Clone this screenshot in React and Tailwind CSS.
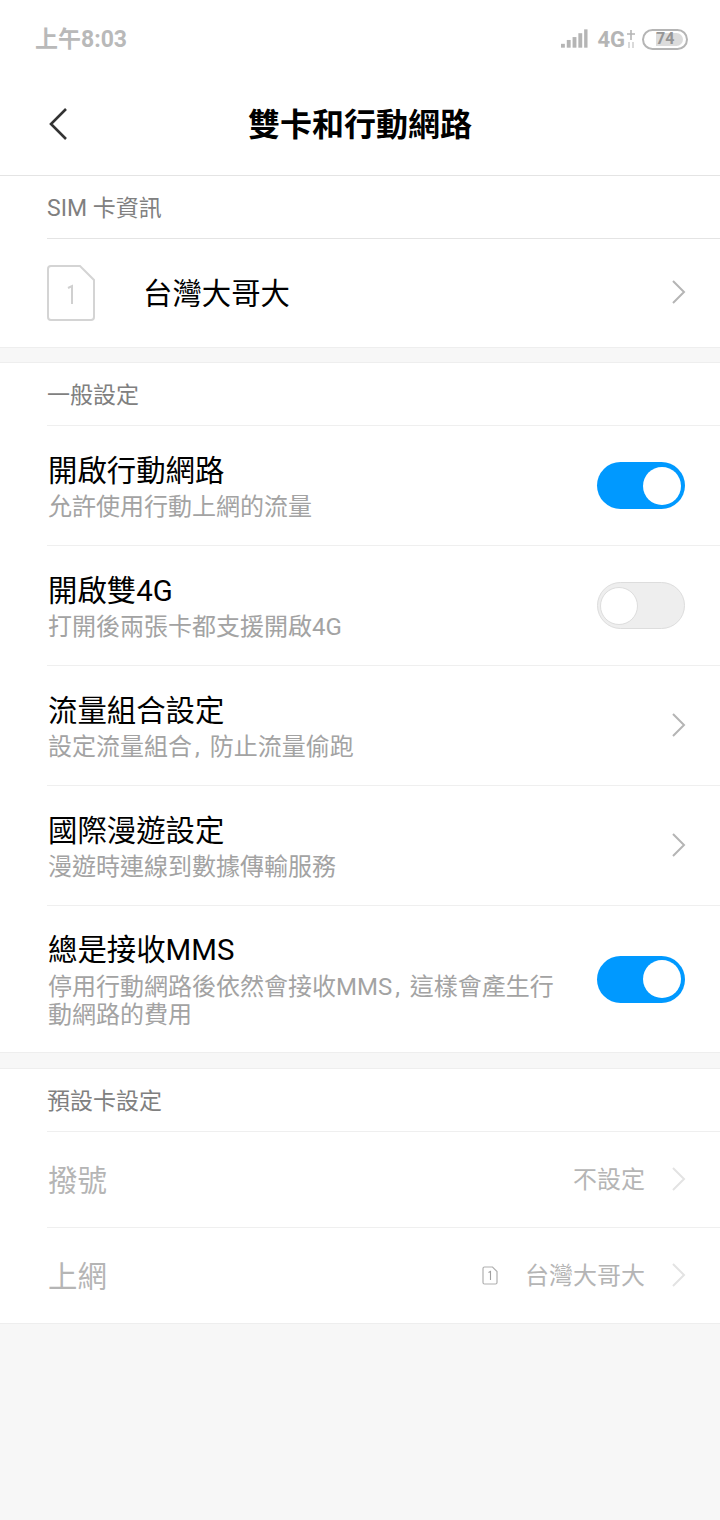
const font = { fontFamily: 'Roboto, "Noto Sans CJK TC", "Noto Sans", sans-serif' }

function Chevron({ light }) {
  return (
    <svg width="16" height="26" viewBox="0 0 16 26" fill="none" className="shrink-0 -mr-[2px] mb-[2px]">
      <path d="M2 2 L13 13 L2 24" stroke={light ? '#e3e3e3' : '#b5b5b5'} strokeWidth="2" />
    </svg>
  )
}

function Toggle({ on }) {
  if (on) {
    return (
      <div className="w-[88px] h-[47px] rounded-full bg-[#0099ff] flex items-center justify-end pr-[4px] shrink-0">
        <div className="w-[38px] h-[38px] rounded-full bg-white" />
      </div>
    )
  }
  return (
    <div className="w-[88px] h-[47px] rounded-full bg-[#eeeeee] border border-[#dddddd] flex items-center pl-[2px] shrink-0">
      <div className="w-[38px] h-[38px] rounded-full bg-white border border-[#dddddd]" />
    </div>
  )
}

function SimIcon({ small }) {
  if (small) {
    return (
      <svg width="16" height="19" viewBox="0 0 16 19" fill="none" className="shrink-0">
        <path d="M2.5 1 H10.5 L15 5.5 V16.5 A1.5 1.5 0 0 1 13.5 18 H2.5 A1.5 1.5 0 0 1 1 16.5 V2.5 A1.5 1.5 0 0 1 2.5 1 Z" stroke="#b0b0b0" strokeWidth="1.2" />
        <path d="M6.5 6.5 L8.5 5.5 V14" stroke="#a0a0a0" strokeWidth="1.1" />
      </svg>
    )
  }
  return (
    <svg width="48" height="56" viewBox="0 0 48 56" fill="none" className="shrink-0">
      <path d="M4 1 H33 L47 15 V52 A3 3 0 0 1 44 55 H4 A3 3 0 0 1 1 52 V4 A3 3 0 0 1 4 1 Z" stroke="#d4d4d4" strokeWidth="2" />
      <path d="M21 23 L25 21 V39" stroke="#d0d0d0" strokeWidth="2" />
    </svg>
  )
}

function SectionTitle({ children }) {
  return (
    <div className="h-[62px] flex items-center pl-[47px] pt-[5px] text-[23px] text-[#808080]">
      {children}
    </div>
  )
}

function Comma() {
  return <span className="ml-[3px] mr-[4px]">, </span>
}

function Row({ title, sub, right }) {
  return (
    <div className="ml-[47px] border-t border-[#efefef] h-[120px] flex items-center pr-[35px]">
      <div className="flex-1 min-w-0 pt-[4px] pl-[1px]">
        <div className="text-[29.4px] leading-[34px] text-black">{title}</div>
        <div className="mt-[4px] text-[24px] leading-[30px] text-[#a3a3a3]">{sub}</div>
      </div>
      {right}
    </div>
  )
}

function Gap({ h }) {
  return <div className={`${h} bg-[#f7f7f7] border-y border-[#eeeeee]`} />
}

export default function App() {
  return (
    <div className="w-[720px] h-[1520px] bg-[#f7f7f7] flex flex-col" style={font}>
      <div className="bg-white">
        {/* status bar */}
        <div className="h-[78px] flex items-center justify-between pl-[35px] pr-[32px]">
          <span className="text-[23px] font-bold text-[#b9b9b9] pt-[2px]">上午8:03</span>
          <div className="flex items-center">
            <svg width="27" height="20" viewBox="0 0 28 20" fill="#b5b5b5">
              <rect x="0" y="15" width="4" height="4" />
              <rect x="6" y="11" width="4" height="8" />
              <rect x="12" y="8" width="4" height="11" />
              <rect x="18" y="4" width="4" height="15" />
              <rect x="24" y="0" width="3.5" height="19" />
            </svg>
            <span className="ml-[9px] text-[22px] font-bold text-[#b5b5b5]">4G</span>
            <svg width="10" height="20" viewBox="0 0 10 20" fill="none" stroke="#b5b5b5" className="ml-[1px]">
              <path d="M5 1 V11 M1 5 H9" strokeWidth="1.6" />
              <path d="M3 13 V19 M7 13 V19" strokeWidth="1" />
            </svg>
            <div className="ml-[6px] w-[46px] h-[21px] rounded-full border-2 border-[#b5b5b5] flex items-center pl-[12px] pr-[3px] py-[2px]">
              <div className="flex-1 h-full rounded-r-full rounded-l-[2px] bg-[#dcdcdc] flex items-center text-[16px] font-bold text-[#959595] leading-none">74</div>
            </div>
          </div>
        </div>

        {/* title bar */}
        <div className="relative h-[98px] flex items-center justify-center border-b border-[#e4e4e4]">
          <svg width="20" height="34" viewBox="0 0 20 34" fill="none" className="absolute left-[48px] top-[29px]">
            <path d="M18 2 L3 17 L18 32" stroke="#333333" strokeWidth="2.6" />
          </svg>
          <span className="text-[32px] font-bold text-black pb-[4px]">雙卡和行動網路</span>
        </div>

        <SectionTitle>SIM 卡資訊</SectionTitle>
        <div className="ml-[47px] border-t border-[#e4e4e4] h-[109px] flex items-center pr-[35px]">
          <SimIcon />
          <span className="ml-[48px] pt-[2px] flex-1 text-[29.4px] text-black">台灣大哥大</span>
          <Chevron />
        </div>
      </div>

      <Gap h="h-[16px]" />

      <div className="bg-white">
        <SectionTitle>一般設定</SectionTitle>
        <Row title="開啟行動網路" sub="允許使用行動上網的流量" right={<Toggle on />} />
        <Row title="開啟雙4G" sub="打開後兩張卡都支援開啟4G" right={<Toggle />} />
        <Row title="流量組合設定" sub={<>設定流量組合<Comma />防止流量偷跑</>} right={<Chevron />} />
        <Row title="國際漫遊設定" sub="漫遊時連線到數據傳輸服務" right={<Chevron />} />
        <div className="ml-[47px] border-t border-[#efefef] h-[147px] flex items-center pr-[35px]">
          <div className="w-[510px] pt-[3px] pl-[1px]">
            <div className="text-[29.4px] leading-[34px] text-black">總是接收MMS</div>
            <div className="mt-[6px] text-[24px] leading-[28px] text-[#a3a3a3]">停用行動網路後依然會接收MMS<Comma />這樣會產生行動網路的費用</div>
          </div>
          <div className="flex-1" />
          <Toggle on />
        </div>
      </div>

      <Gap h="h-[17px]" />

      <div className="bg-white">
        <SectionTitle>預設卡設定</SectionTitle>
        <div className="ml-[47px] border-t border-[#efefef] h-[96px] flex items-center pr-[35px]">
          <span className="flex-1 pt-[4px] pl-[1px] text-[29.4px] text-[#b5b5b5]">撥號</span>
          <span className="text-[24px] text-[#b5b5b5] mr-[26px]">不設定</span>
          <Chevron light />
        </div>
        <div className="ml-[47px] border-t border-[#efefef] h-[96px] flex items-center pr-[35px]">
          <span className="flex-1 pt-[4px] pl-[1px] text-[29.4px] text-[#b5b5b5]">上網</span>
          <SimIcon small />
          <span className="ml-[27px] text-[24px] text-[#b5b5b5] mr-[26px]">台灣大哥大</span>
          <Chevron light />
        </div>
      </div>
      <div className="border-t border-[#eeeeee]" />
    </div>
  )
}
